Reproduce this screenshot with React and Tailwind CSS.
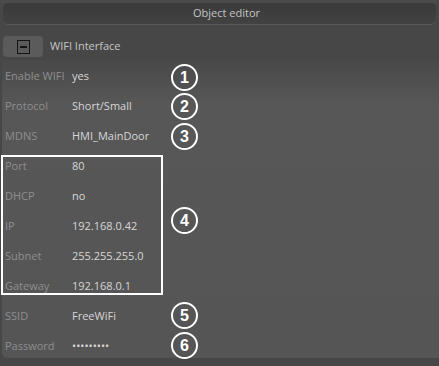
import React from "react";

const rows = [
  ["Enable WIFI", "yes"],
  ["Protocol", "Short/Small"],
  ["MDNS", "HMI_MainDoor"],
  ["Port", "80"],
  ["DHCP", "no"],
  ["IP", "192.168.0.42"],
  ["Subnet", "255.255.255.0"],
  ["Gateway", "192.168.0.1"],
  ["SSID", "FreeWiFi"],
  ["Password", "•••••••••"],
];

const marks = [
  { n: "1", cls: "top-[64px]" },
  { n: "2", cls: "top-[93px]" },
  { n: "3", cls: "top-[123px]" },
  { n: "4", cls: "top-[207px]" },
  { n: "5", cls: "top-[302px]" },
  { n: "6", cls: "top-[332px]" },
];

export default function App() {
  return (
    <div
      className="relative w-[439px] h-[366px] overflow-hidden bg-[#474747] text-[11px]"
      style={{ fontFamily: '"Open Sans", "Noto Sans", sans-serif' }}
    >
      <div className="h-[3px] bg-[#4a4a4a]" />
      <div className="mx-[3px] h-[22px] rounded-[5px] bg-gradient-to-b from-[#3a3a3a] to-[#424242] border-b border-[#575757] flex items-center justify-center pl-[14px] text-[#c4c4c4]">
        Object editor
      </div>
      <div className="mt-[11px] flex items-center h-[21px]">
        <div className="ml-[3px] w-[40px] h-[21px] rounded-[4px] bg-[#5b5b5b] flex items-center justify-center">
          <div className="w-[13px] h-[14px] border-[1.5px] border-[#151515] flex items-center justify-center">
            <div className="w-[7px] h-[2px] bg-[#151515]" />
          </div>
        </div>
        <span className="ml-[7px] text-[#c6c6c6]">WIFI Interface</span>
      </div>
      <div className="mt-[3px] ml-[2px] h-[298px] rounded-bl-[6px] bg-gradient-to-b from-[#494949] via-[#575757] via-[15%] to-[#555555] pt-[1px] pl-[3px]">
        {rows.map(([label, value]) => (
          <div key={label} className="flex items-center h-[30px]">
            <span className="w-[67px] text-[#8e8e8e]">{label}</span>
            <span className="text-[#d6d6d6]">{value}</span>
          </div>
        ))}
      </div>
      <div className="absolute left-[1px] top-[155px] w-[162px] h-[140px] border-2 border-white" />
      {marks.map((m) => (
        <div
          key={m.n}
          className={`absolute left-[171px] ${m.cls} w-[27px] h-[27px] rounded-full border-2 border-white flex items-center justify-center text-white font-bold text-[16px] leading-none`}
          style={{ fontFamily: '"Liberation Sans", Arial, sans-serif' }}
        >
          {m.n}
        </div>
      ))}
    </div>
  );
}
